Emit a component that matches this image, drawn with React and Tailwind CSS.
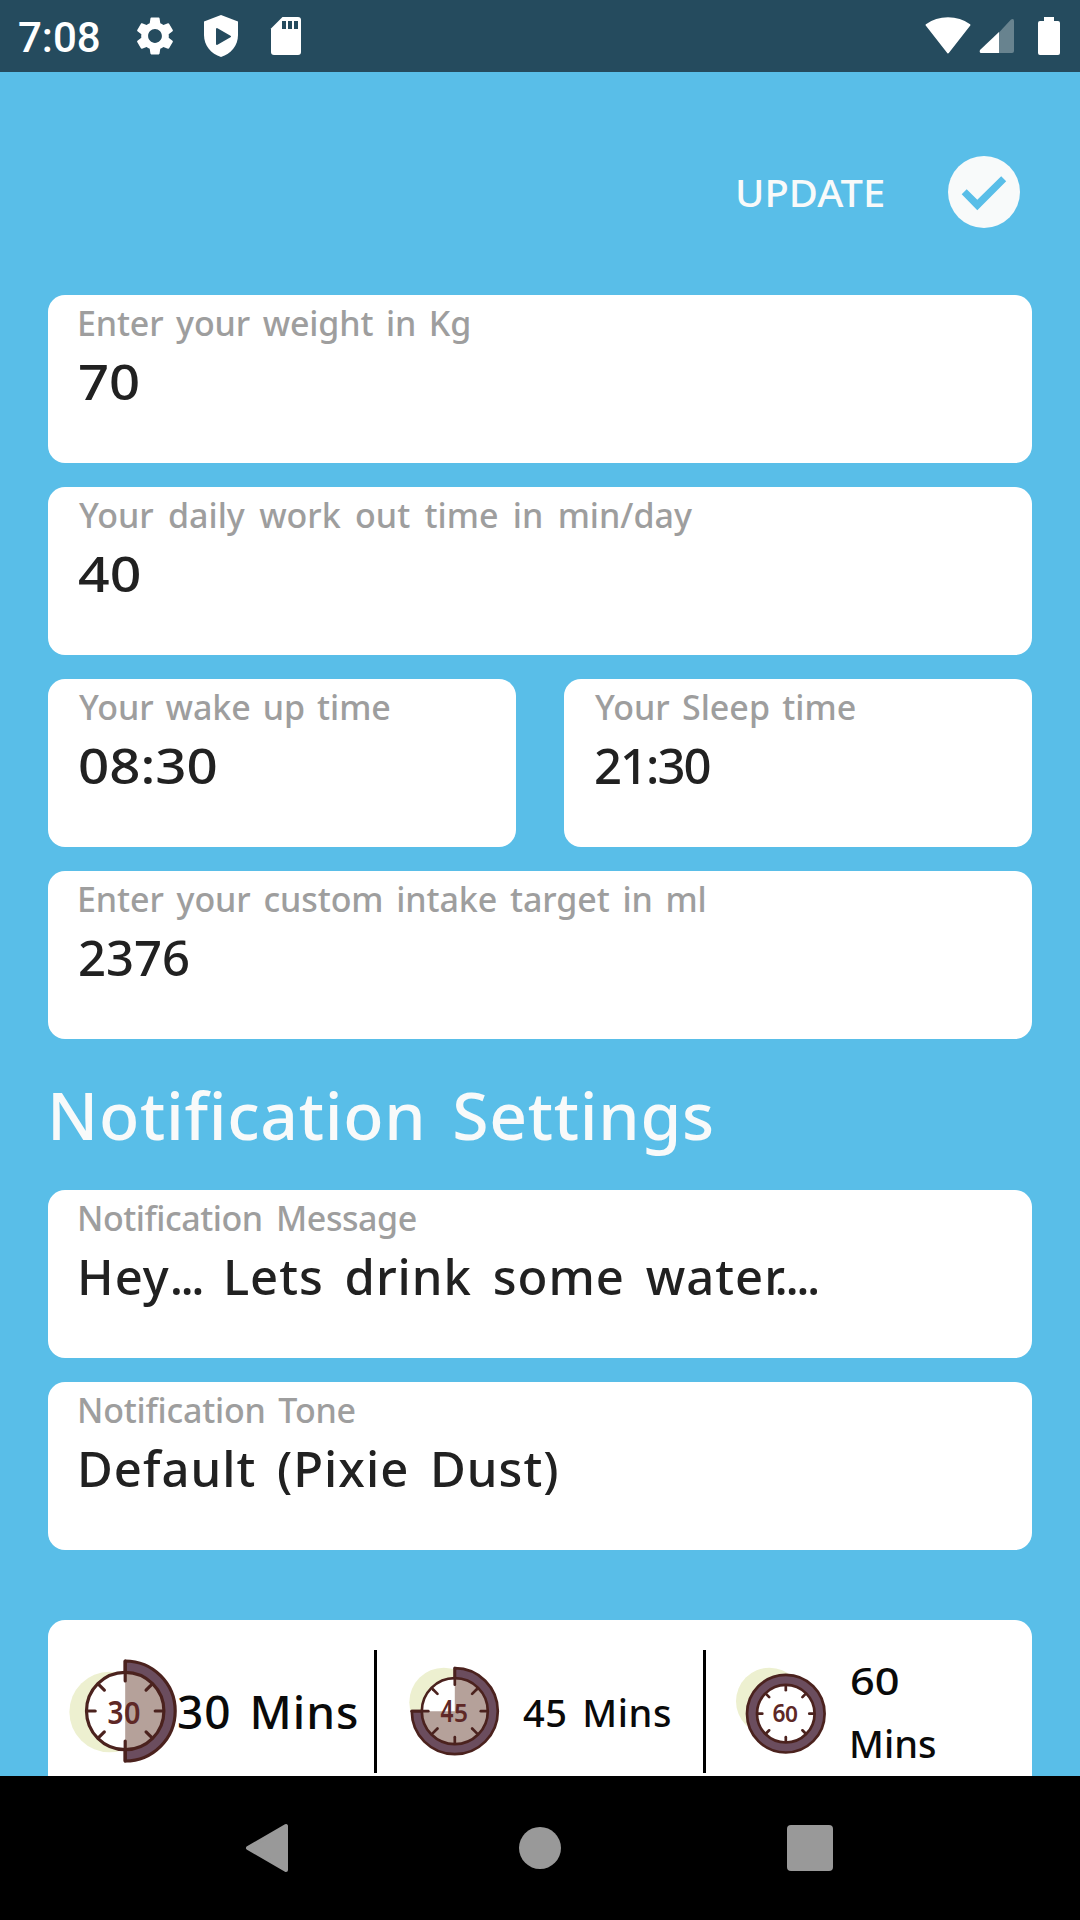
import { MdSettings } from "react-icons/md";

function StatusBar() {
    return (
        <div className="flex h-[72px] shrink-0 items-center justify-between bg-[#254b5e] pr-[19px] pl-[18px] text-white">
            <div className="flex items-center">
                <span className="w-[114px] pt-[3px] font-['Roboto',sans-serif] text-[42px] leading-[48px] font-medium">7:08</span>
                <MdSettings className="size-[46px]" />
                <svg className="ml-[24px]" width="38" height="44" viewBox="0 0 38 44">
                    <path fill="#fff" d="M19 1 36 7.500V21C36 31.500 29 40 19 43 9 40 2 31.500 2 21V7.500Z" />
                    <path fill="#254b5e" stroke="#254b5e" strokeWidth="2" strokeLinejoin="round" d="M15 15v15l13-7.500z" />
                </svg>
                <svg className="ml-[30px]" width="32" height="40" viewBox="0 0 32 40">
                    <path fill="#fff" d="M12.500 1H28a3 3 0 0 1 3 3V36a3 3 0 0 1-3 3H4a3 3 0 0 1-3-3V12.500Z" />
                    <path fill="#254b5e" d="M12 5h4v8h-4zM18 5h4v8h-4zM24 5h4v8h-4z" />
                </svg>
            </div>
            <div className="flex items-center">
                <svg width="46" height="38" viewBox="0 0 46 38">
                    <path fill="#fff" stroke="#fff" strokeWidth="2" strokeLinejoin="round" d="M1.500 8C14-1 32-1 44.500 8L23 35.500Z" />
                </svg>
                <svg className="ml-[8px]" width="36" height="36" viewBox="0 0 36 36">
                    <path fill="#68838f" d="M1 35 32 1.500Q35 0 35 3V33Q35 35 33 35Z" />
                    <path fill="#fff" d="M20 14V35H2Q0 34.500 1 32Z" />
                </svg>
                <svg className="ml-[22px]" width="24" height="40" viewBox="0 0 24 40">
                    <path fill="#fff" d="M7 1h10v4h4q2 0 2 2v30q0 2-2 2H3q-2 0-2-2V7q0-2 2-2h4z" />
                </svg>
            </div>
        </div>
    );
}

function Field({ label, value, labelClass = "ml-px", valueClass = "", className = "" }) {
    return (
        <div className={`h-[168px] rounded-[17px] bg-white pt-[5px] pl-7 whitespace-nowrap ${className}`}>
            <div className={`text-[34px] leading-[46px] text-[#9e9e9e] ${labelClass}`}>{label}</div>
            <div className={`mt-[2px] w-fit origin-left text-[49px] leading-[66px] text-[#212121] ${valueClass}`}>{value}</div>
        </div>
    );
}

// short strokes every 45deg round the dial
function Ticks({ cx, cy, from, to, angles }) {
    return angles.map((a) => (
        <line key={a} x1={cx} y1={cy - from} x2={cx} y2={cy - to} transform={`rotate(${a} ${cx} ${cy})`} />
    ));
}

function Clock30() {
    return (
        <svg className="ml-[18px] shrink-0" width="112" height="110" viewBox="66 1656.500 112 110">
            <circle cx="109.700" cy="1711.500" r="40.300" fill="#edf0d0" />
            <g stroke="#4b221e" strokeWidth="3.200" strokeLinecap="round" strokeLinejoin="round">
                <circle cx="125.200" cy="1710.500" r="38.700" fill="#fff" stroke="none" />
                <path fill="#6b4d5e" d="M125.200 1660.500a50 50 0 0 1 0 100Z" />
                <path fill="#fff" stroke="none" d="M125.200 1671.800a38.700 38.700 0 0 0 0 77.400h1.800V1671.800Z" />
                <path fill="#b5a19a" stroke="none" d="M125.200 1671.800a38.700 38.700 0 0 1 0 77.400Z" />
                <circle cx="125.200" cy="1710.500" r="38.700" fill="none" />
                <Ticks cx={125.2} cy={1710.5} from={30} to={50} angles={[0, 180]} />
                <Ticks cx={125.2} cy={1710.5} from={30} to={38} angles={[90, 270]} />
                <Ticks cx={125.2} cy={1710.5} from={29.5} to={37} angles={[45, 135, 225, 315]} />
            </g>
            <g fill="#5e2826" className="font-['Noto_Sans',sans-serif] font-semibold">
                <text x="107.500" y="1723" fontSize="33" textLength="16" lengthAdjust="spacingAndGlyphs">3</text>
                <text x="124" y="1723" fontSize="30" textLength="16.500" lengthAdjust="spacingAndGlyphs">0</text>
            </g>
        </svg>
    );
}

function Clock45() {
    return (
        <svg className="ml-[28px] shrink-0" width="100" height="94" viewBox="405 1664.500 100 94">
            <circle cx="443.800" cy="1701.700" r="34.500" fill="#edf0d0" />
            <g stroke="#4b221e" strokeWidth="2.700" strokeLinecap="round" strokeLinejoin="round">
                <path fill="#6b4d5e" d="M454.800 1710.700V1667.700a43 43 0 1 1-43 43Z" />
                <circle cx="454.800" cy="1710.700" r="33" fill="#fff" stroke="none" />
                <path fill="#b5a19a" stroke="none" d="M454.800 1710.700V1677.700a33 33 0 1 1-33 33Z" />
                <circle cx="454.800" cy="1710.700" r="33" fill="none" />
                <Ticks cx={454.8} cy={1710.7} from={26.5} to={43} angles={[0, 270]} />
                <Ticks cx={454.8} cy={1710.7} from={26} to={32} angles={[90, 180]} />
                <Ticks cx={454.8} cy={1710.7} from={24.5} to={31} angles={[45, 135, 225, 315]} />
            </g>
            <g fill="#5e2826" className="font-['Noto_Sans',sans-serif] font-semibold">
                <text x="440.500" y="1721.500" fontSize="30" textLength="13" lengthAdjust="spacingAndGlyphs">4</text>
                <text x="454" y="1721.500" fontSize="25" textLength="14" lengthAdjust="spacingAndGlyphs">5</text>
            </g>
        </svg>
    );
}

function Clock60() {
    return (
        <svg className="ml-[26px] shrink-0" width="98" height="94" viewBox="732 1664.500 98 94">
            <circle cx="769.500" cy="1700.700" r="33.500" fill="#edf0d0" />
            <g stroke="#4b221e" strokeWidth="2.700" strokeLinecap="round">
                <circle cx="785.800" cy="1713.200" r="38.800" fill="#6b4d5e" />
                <circle cx="785.800" cy="1713.200" r="28.800" fill="#fff" />
                <Ticks cx={785.8} cy={1713.2} from={23.5} to={28} angles={[0, 45, 90, 135, 180, 225, 270, 315]} />
            </g>
            <g fill="#5e2826" className="font-['Noto_Sans',sans-serif] font-semibold">
                <text x="772.500" y="1721.500" fontSize="26" textLength="13" lengthAdjust="spacingAndGlyphs">6</text>
                <text x="785" y="1721.500" fontSize="21.500" textLength="13" lengthAdjust="spacingAndGlyphs">0</text>
            </g>
        </svg>
    );
}

function NavBar() {
    return (
        <div className="flex h-[144px] shrink-0 items-center bg-black pl-[245px]">
            <svg width="44" height="50" viewBox="0 0 44 50">
                <path fill="#999" stroke="#999" strokeWidth="4" strokeLinejoin="round" d="M3 25 41 3V47Z" />
            </svg>
            <div className="ml-[230px] size-[42px] rounded-full bg-[#999]" />
            <div className="ml-[226px] size-[46px] rounded-[4px] bg-[#999]" />
        </div>
    );
}

export default function App() {
    const message = (
        <>
            Hey<span className="tracking-[-2.5px]">...</span> Lets drink some wate<span className="tracking-[-2.5px]">r....</span>
        </>
    );

    return (
        <div className="flex h-[1920px] w-[1080px] flex-col overflow-hidden bg-[#59bee8] font-['Noto_Sans',sans-serif] font-medium">
            <StatusBar />

            <div className="flex h-[1704px] flex-col px-12">
                <div className="flex h-[223px] shrink-0 items-start justify-end pt-[84px] pr-3">
                    <button className="mt-[10px] w-[213px] origin-left scale-x-[1.05] text-left text-[38px] leading-[52px] text-[#f8fafa]">UPDATE</button>
                    <svg width="72" height="72" viewBox="0 0 72 72">
                        <circle cx="36" cy="36" r="36" fill="#f8fafa" />
                        <path fill="#59bee8" d="M13.700 38.300 18.700 33.300 29.300 43.700 53.200 20.300 58.200 25.300 29.300 54.300Z" />
                    </svg>
                </div>

                <div className="flex flex-col gap-6">
                    <Field label="Enter your weight in Kg" value="70" labelClass="ml-px [word-spacing:4px] tracking-[-0.15px]" valueClass="ml-0.5 scale-x-[1.11]" />
                    <Field label="Your daily work out time in min/day" value="40" labelClass="ml-[3px] [word-spacing:5.5px]" valueClass="ml-0.5 scale-x-[1.13]" />
                    <div className="flex gap-12">
                        <Field className="flex-1" label="Your wake up time" value="08:30" labelClass="ml-[3px] [word-spacing:3px]" valueClass="ml-0.5 scale-x-[1.115]" />
                        <Field className="flex-1" label="Your Sleep time" value="21:30" labelClass="ml-[3px] [word-spacing:3.5px]" valueClass="ml-0.5 tracking-[-2px]" />
                    </div>
                    <Field label="Enter your custom intake target in ml" value="2376" labelClass="ml-px [word-spacing:4px] tracking-[-0.08px]" valueClass="ml-0.5" />
                </div>

                <h1 className="mt-[30px] mb-[31px] ml-[-1px] text-[66px] leading-[90px] tracking-[0.7px] whitespace-nowrap text-[#f8fafa] [word-spacing:8px]">
                    Notification Settings
                </h1>

                <div className="flex flex-col gap-6">
                    <Field label="Notification Message" value={message} labelClass="ml-px [word-spacing:5px] tracking-[-0.45px]" valueClass="ml-px [word-spacing:7px] tracking-[1px]" />
                    <Field label="Notification Tone" value="Default (Pixie Dust)" labelClass="ml-px [word-spacing:4px] tracking-[-0.2px]" valueClass="ml-px [word-spacing:7px] tracking-[1px]" />
                </div>

                <div className="mt-[70px] flex h-[156px] shrink-0 rounded-t-[17px] bg-white pt-[30px] text-[38px] text-[#0a0a0a]">
                    <div className="flex h-[123px] w-[326px] items-center whitespace-nowrap">
                        <Clock30 />
                        <span className="ml-[-1px] pb-0.5 text-[46px] leading-[62px] tracking-[1px] [word-spacing:5px]">30 Mins</span>
                    </div>
                    <div className="h-[123px] w-[3px] bg-black" />
                    <div className="flex h-[123px] w-[326px] items-center whitespace-nowrap">
                        <Clock45 />
                        <span className="ml-[18px] leading-[52px] tracking-[0.6px] [word-spacing:4px]">45 Mins</span>
                    </div>
                    <div className="h-[123px] w-[3px] bg-black" />
                    <div className="flex h-[123px] w-[326px] items-center">
                        <Clock60 />
                        <div className="ml-[19px] leading-[63px]">
                            <div className="ml-px w-fit origin-left scale-x-[1.14]">60</div>
                            <div>Mins</div>
                        </div>
                    </div>
                </div>
            </div>

            <NavBar />
        </div>
    );
}
